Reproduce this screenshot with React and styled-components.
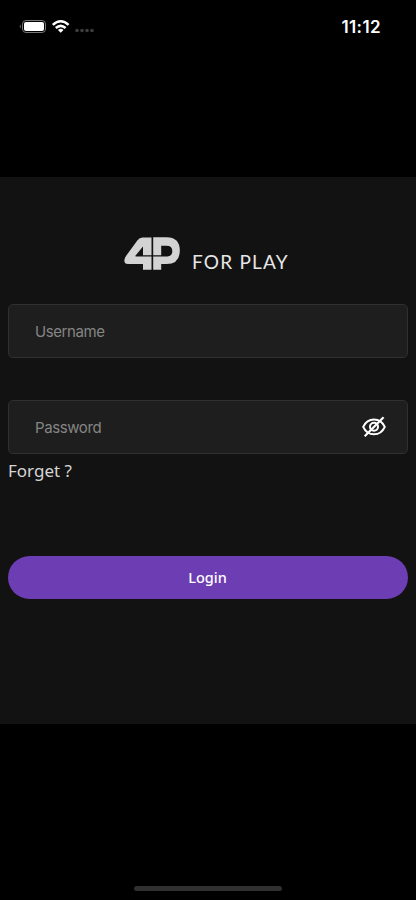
import React, { useState } from 'react';
import styled, { createGlobalStyle } from 'styled-components';

const GlobalStyle = createGlobalStyle`
  * {
    box-sizing: border-box;
  }

  body {
    margin: 0;
    background: #000;
    font-family: Inter, sans-serif;
  }
`;

const Screen = styled.div`
  display: flex;
  flex-direction: column;
  height: 900px;
  background: #000;
`;

const StatusBar = styled.header`
  display: flex;
  justify-content: space-between;
  align-items: flex-start;
  height: 177px;
  padding: 17px 35px 0 18px;
  color: #fff;
`;

const Time = styled.span`
  font-size: 17px;
  font-weight: 600;
  line-height: 20px;
  letter-spacing: 0.4px;
`;

const Main = styled.main`
  height: 547px;
  padding: 59px 8px 0;
  background: #121212;
`;

const Brand = styled.div`
  display: flex;
  align-items: flex-start;
  height: 68px;
  padding-left: 115px;
`;

const BrandName = styled.span`
  margin: 14px 0 0 11px;
  color: #e6e6e6;
  font-family: Lato, sans-serif;
  font-size: 19px;
  line-height: 24px;
  letter-spacing: 1.2px;
  white-space: nowrap;
`;

const Field = styled.div`
  display: flex;
  align-items: center;
  height: 54px;
  margin-bottom: ${(props) => props.$gap || 0}px;
  padding: 0 20px 0 26px;
  background: #1e1e1e;
  border: 1px solid #303030;
  border-radius: 5px;
`;

const Input = styled.input`
  flex: 1;
  min-width: 0;
  padding: 2px 0 0;
  border: 0;
  outline: 0;
  background: transparent;
  color: #e6e6e6;
  font-family: Inter, sans-serif;
  font-size: 15px;
  line-height: 20px;
  letter-spacing: -0.4px;

  &::placeholder {
    color: #858585;
    opacity: 1;
  }
`;

const IconButton = styled.button`
  display: flex;
  padding: 0;
  border: 0;
  background: none;
  color: #fff;
`;

const ForgetLink = styled.a`
  display: block;
  margin-top: 5px;
  color: #d5d5d5;
  font-family: 'Noto Sans', sans-serif;
  font-size: 17px;
  line-height: 24px;
`;

const LoginButton = styled.button`
  display: block;
  width: 100%;
  height: 43px;
  margin-top: 73px;
  padding: 0 1px 1px 0;
  border: 0;
  border-radius: 22px;
  background: #6d3db3;
  color: #fff;
  font-family: 'Noto Sans', sans-serif;
  font-size: 14.5px;
  font-weight: 500;
`;

const Footer = styled.footer`
  display: flex;
  flex: 1;
  justify-content: center;
  align-items: flex-end;
  padding-bottom: 9px;
`;

const HomeIndicator = styled.div`
  width: 148px;
  height: 5px;
  border-radius: 3px;
  background: #303030;
`;

const StatusIcons = () => (
  <svg width="78" height="20" viewBox="0 0 78 20" fill="none">
    <path d="M2.7 7.5Q.7 9.5 2.7 11.5Z" fill="#777" />
    <rect x="4.5" y="3.5" width="23" height="12" rx="3.5" stroke="#777" />
    <rect x="6" y="5" width="20" height="9" rx="2" fill="#fff" />
    <g stroke="#fff" strokeWidth="2.5">
      <path d="M34.8 7.8Q42.7 .6 50.6 7.8" />
      <path d="M37.8 11Q42.7 6.7 47.6 11" />
    </g>
    <path d="M39.9 12.9Q42.7 10.8 45.5 12.9L42.7 15.7Z" fill="#fff" />
    <g fill="#3d3d3d">
      <circle cx="59" cy="13.5" r="1.8" />
      <circle cx="64" cy="13.5" r="1.8" />
      <circle cx="69" cy="13.5" r="1.8" />
      <circle cx="74" cy="13.5" r="1.8" />
    </g>
  </svg>
);

const BrandMark = () => (
  <svg width="58" height="36" viewBox="0 0 58 36">
    <path
      fill="#d3d3d3"
      fillRule="evenodd"
      d="M19.5 1.5H28.5V19.3H12.5V20.5H28.5V33.8H20V28H5Q1.3 28 1.3 24.5Q1.3 22.5 3 20L14.5 4.2Q16.5 1.5 19.5 1.5ZM20 10.5V19.3H12.8Z"
    />
    <path
      fill="#d3d3d3"
      fillRule="evenodd"
      d="M30.2 1.2H43.5Q56.8 1.2 56.8 14.6Q56.8 28 43.5 28H38.2V33.8H30.2V20.5H44.5Q49.3 20 49.3 15Q49.3 9.8 43.5 9.8H38.2V19.3H30.2Z"
    />
  </svg>
);

const EyeOff = () => (
  <svg width="26" height="24" viewBox="0 0 26 24" fill="none" stroke="currentColor" strokeWidth="2">
    <path d="M2.2 11.8C4.5 6.8 8.2 4.4 13 4.4S21.5 6.8 23.8 11.8C21.5 16.8 17.8 19.2 13 19.2S4.5 16.8 2.2 11.8Z" />
    <circle cx="13" cy="11.8" r="4" />
    <path d="M3.7 21.2L22.6 2.3" strokeWidth="2.2" />
  </svg>
);

const App = () => {
  const [visible, setVisible] = useState(false);

  return (
    <Screen>
      <GlobalStyle />
      <StatusBar>
        <StatusIcons />
        <Time>11:12</Time>
      </StatusBar>
      <Main>
        <Brand>
          <BrandMark />
          <BrandName>FOR PLAY</BrandName>
        </Brand>
        <Field $gap={42}>
          <Input placeholder="Username" />
        </Field>
        <Field>
          <Input type={visible ? 'text' : 'password'} placeholder="Password" />
          <IconButton onClick={() => setVisible(!visible)}>
            <EyeOff />
          </IconButton>
        </Field>
        <ForgetLink>Forget ?</ForgetLink>
        <LoginButton>Login</LoginButton>
      </Main>
      <Footer>
        <HomeIndicator />
      </Footer>
    </Screen>
  );
};

export default App;
